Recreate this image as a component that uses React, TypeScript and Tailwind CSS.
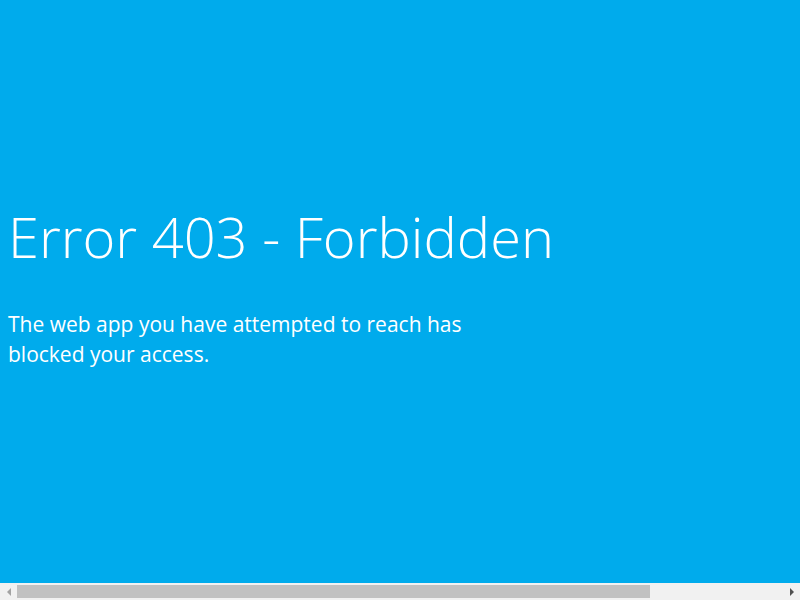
import React from 'react';

const App: React.FC = () => {
  return (
    <div className="w-[800px] h-[600px] overflow-hidden flex flex-col bg-[#00abec] text-white" style={{ fontFamily: '"Open Sans", "Noto Sans", sans-serif' }}>
      <main className="flex-1 flex flex-col justify-center px-[8px] pb-[14px]">
        <h1 className="text-[56px] leading-[70px] font-light">Error 403 - Forbidden</h1>
        <p className="mt-[38px] max-w-[480px] text-[21px] leading-[30px]">
          The web app you have attempted to reach has blocked your access.
        </p>
      </main>

      {/* horizontal scrollbar */}
      <div className="h-[17px] flex items-center bg-[#f1f1f1]">
        <div className="w-[17px] h-full flex items-center justify-center">
          <div className="w-0 h-0 border-y-[4px] border-y-transparent border-r-[4px] border-r-[#a3a3a3]" />
        </div>
        <div className="w-[633px] h-[13px] bg-[#c1c1c1]" />
        <div className="flex-1" />
        <div className="w-[17px] h-full flex items-center justify-center">
          <div className="w-0 h-0 border-y-[4px] border-y-transparent border-l-[4px] border-l-[#505050]" />
        </div>
      </div>
    </div>
  );
};

export default App;
